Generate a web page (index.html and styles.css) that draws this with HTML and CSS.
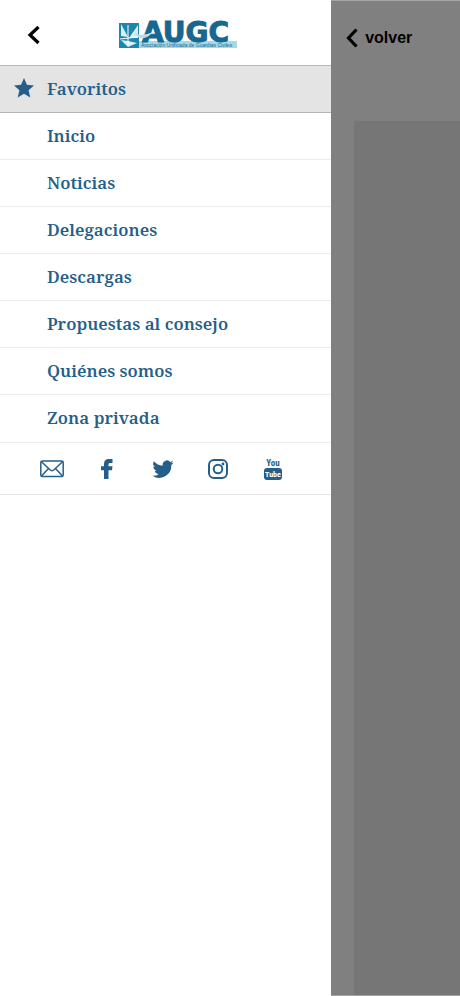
FILE: index.html
```html
<!DOCTYPE html>
<html lang="es">
<head>
<meta charset="utf-8">
<meta name="viewport" content="width=device-width, initial-scale=1">
<title>AUGC</title>
<link rel="stylesheet" href="styles.css">
</head>
<body>
<div class="app">
  <aside class="drawer">
    <header class="drawer-head">
      <button class="icon-button" type="button" aria-label="Cerrar menú">
        <svg width="14" height="20" viewBox="0 0 14 20"><path d="M11.5 2 3 10l8.500 8" fill="none" stroke="#000" stroke-width="3.200"/></svg>
      </button>
      <svg class="logo" width="120" height="28" viewBox="0 0 120 28" role="img" aria-label="AUGC">
        <rect x="1" y="2" width="20" height="25" fill="#1e85ad"/>
        <path d="M3 3 10 16 3 15zM11 17l9-13v13zM3 19l7 1 9 2-9 4z" fill="#d9f0f5"/>
        <path d="M10 4v19M2 18l18-2" stroke="#fff" stroke-width="1" fill="none"/>
        <rect x="21" y="20" width="98" height="7" fill="#a5d9e6"/>
        <text class="logo-name" x="24" y="21">AUGC</text>
        <path d="M13 10q9 7 22 1-8 9-15 5z" fill="#b9dfe8"/>
        <text class="logo-tag" x="23" y="26">Asociación Unificada de Guardias Civiles</text>
      </svg>
    </header>
    <nav class="menu">
      <a class="item favorite" href="#">
        <svg class="star" width="20" height="20" viewBox="0 0 20 20"><path d="m10 0 2.900 6.800 7.100.6-5.400 4.900 1.700 7.200L10 15.800l-6.300 3.700 1.700-7.200L0 7.400l7.100-.6z"/></svg>
        <span>Favoritos</span>
      </a>
      <a class="item" href="#">Inicio</a>
      <a class="item" href="#">Noticias</a>
      <a class="item" href="#">Delegaciones</a>
      <a class="item" href="#">Descargas</a>
      <a class="item" href="#">Propuestas al consejo</a>
      <a class="item" href="#">Quiénes somos</a>
      <a class="item" href="#">Zona privada</a>
    </nav>
    <div class="social">
      <a href="#" aria-label="Correo"><svg width="24" height="24" viewBox="0 0 24 24"><g class="line"><rect x=".8" y="4" width="22.400" height="15.500" rx="1.500"/><path d="m1.500 4.800 8.500 8q2 1.800 4 0l8.500-8M1.500 19l7-7.400M22.500 19l-7-7.400"/></g></svg></a>
      <a href="#" aria-label="Facebook"><svg width="24" height="24" viewBox="0 0 24 24"><path d="M9 22v-8.800H6V9.300h3V7C9 3.500 10.800 2 13.800 2H17.500v4h-2.300c-1.200 0-1.700.5-1.700 1.600v1.700h4l-.5 3.900h-3.500V22z"/></svg></a>
      <a href="#" aria-label="Twitter"><svg width="24" height="24" viewBox="0 0 24 24"><path d="M22.500 5.500c-.8.400-1.600.6-2.500.7.900-.5 1.600-1.400 1.900-2.400-.8.500-1.800.9-2.700 1.100a4.300 4.300 0 0 0-7.400 3.900A12.200 12.200 0 0 1 2.900 4.300a4.300 4.300 0 0 0 1.300 5.800c-.7 0-1.400-.2-1.900-.5 0 2.100 1.500 3.800 3.400 4.300-.6.200-1.300.2-1.900.1.500 1.700 2.100 3 4 3a8.700 8.700 0 0 1-6.400 1.800 12.200 12.200 0 0 0 18.900-10.800c.9-.6 1.600-1.400 2.200-2.500z"/></svg></a>
      <a href="#" aria-label="Instagram"><svg width="24" height="24" viewBox="0 0 24 24"><g class="line bold"><rect x="3" y="3" width="18" height="18" rx="5"/><circle cx="12" cy="12" r="4.300"/></g><circle cx="17" cy="7" r="1.400"/></svg></a>
      <a href="#" aria-label="YouTube"><svg width="24" height="24" viewBox="0 0 24 24"><text class="tube" x="12" y="9">You</text><rect x="3" y="11" width="18" height="12" rx="3"/><text class="tube inverse" x="12" y="20">Tube</text></svg></a>
    </div>
  </aside>
  <main class="page">
    <button class="back" type="button">
      <svg width="12" height="20" viewBox="0 0 12 20"><path d="m10.500 1.500-8 8.500 8 8.500" fill="none" stroke="#000" stroke-width="3.200"/></svg>
      <span>volver</span>
    </button>
    <div class="content"></div>
  </main>
</div>
</body>
</html>
```
FILE: styles.css
```css
* { box-sizing: border-box; }

body {
  margin: 0;
  background: #fff;
  font-family: "Liberation Sans", sans-serif;
}

.app {
  display: grid;
  grid-template-columns: 72% 1fr;
  min-height: 100vh;
}

.drawer { background: #fff; }

.drawer-head {
  display: grid;
  grid-template-columns: 1fr auto 1fr;
  align-items: center;
  height: 65px;
  padding: 5px 0 0;
}

.drawer-head .logo {
  grid-column: 2;
  margin-left: 24px;
  overflow: visible;
}

.icon-button {
  justify-self: start;
  display: flex;
  margin-left: 27px;
  padding: 0;
  border: 0;
  background: none;
}

.logo-name {
  font: bold 28px "DejaVu Sans", sans-serif;
  fill: #176791;
  stroke: #176791;
  stroke-width: 1px;
}

.logo-tag {
  font: 5px "Liberation Sans", sans-serif;
  fill: #176791;
}

.item {
  display: flex;
  align-items: center;
  height: 47px;
  padding: 0 0 2px 47px;
  border-bottom: 1px solid #ebebeb;
  color: #255f89;
  font: 600 17px "Noto Serif SemiCondensed", "Noto Serif", "Droid Serif", "Liberation Serif", serif;
  text-decoration: none;
}

.item:last-child { height: 48px; }

.item.favorite {
  gap: 13px;
  height: 48px;
  padding-left: 14px;
  border-top: 1px solid #b5b5b5;
  border-bottom-color: #b5b5b5;
  background: #e4e4e4;
}

.star { fill: #255f89; }

.social {
  display: flex;
  justify-content: space-between;
  align-items: center;
  height: 52px;
  padding: 0 46px 0 40px;
  border-bottom: 1px solid #e4e4e4;
}

.social a { display: flex; }
.social svg { fill: #255f89; }

.line { fill: none; stroke: #255f89; stroke-width: 1.5px; }
.line.bold { stroke-width: 2px; }

.tube {
  font: bold 9px "Roboto Condensed", "Liberation Sans", sans-serif;
  text-anchor: middle;
}

.tube.inverse { font-size: 8px; fill: #fff; }

.page {
  display: flex;
  flex-direction: column;
  border-top: 1px solid #a5a5a5;
  border-bottom: 1px solid #a5a5a5;
  background: #808080;
}

.back {
  display: flex;
  align-items: center;
  gap: 7px;
  height: 120px;
  padding: 0 0 46px 15px;
  border: 0;
  background: none;
  color: #000;
  font: bold 16px "Liberation Sans", sans-serif;
}

.content {
  flex: 1;
  margin-left: 23px;
  background: #767676;
}
```
